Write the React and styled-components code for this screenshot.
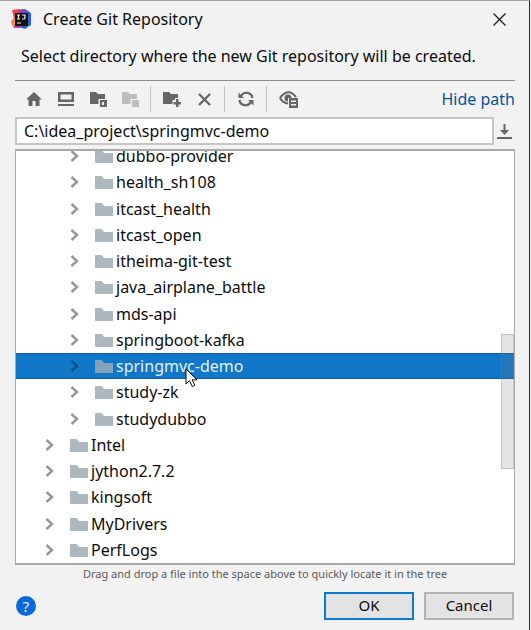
import React, { useState } from "react";
import styled, { createGlobalStyle } from "styled-components";

const GlobalStyle = createGlobalStyle`
  *, *::before, *::after { box-sizing: border-box; }
  body { margin: 0; background: #f1f1f1; }
  body, button, input { font-family: "Noto Sans", "Open Sans", sans-serif; font-size: 16px; color: #0c0c0c; }
`;

const Dialog = styled.main`
  display: flex;
  flex-direction: column;
  height: 100vh;
  min-height: 420px;
  margin-right: 1px;
  padding: 0 14px 10px 15px;
  background: #f2f2f2;
  border-top: 1px solid #a6a6a6;
  border-right: 1px solid #2a2a2a;
`;

const TitleBar = styled.header`
  display: flex;
  align-items: center;
  height: 36px;
  margin-left: -4px;
  gap: 11px;
`;

const Title = styled.h1`
  flex: 1;
  margin: 0;
  font-size: 16px;
  line-height: 24px;
  font-weight: 400;
`;

const IconButton = styled.button`
  display: flex;
  align-items: center;
  justify-content: center;
  width: ${(p) => p.$width || 32}px;
  height: 26px;
  padding: 0;
  border: 0;
  background: none;
  color: #666;
  &:disabled { color: #bdbdbd; }
`;

const CloseButton = styled(IconButton)`
  color: #1c1c1c;
`;

const Prompt = styled.p`
  margin: 0;
  padding: 7px 6px 12px;
  line-height: 24px;
  white-space: nowrap;
`;

const Toolbar = styled.div`
  display: flex;
  align-items: center;
  height: 37px;
  padding-left: 3px;
  border-top: 1px solid #8c8c8c;
`;

const Separator = styled.span`
  width: 1px;
  height: 26px;
  margin: 0 5px 0 4px;
  background: #c3c3c3;
`;

const PathLink = styled.a`
  margin-left: auto;
  color: #07529a;
  line-height: 24px;
  text-decoration: none;
`;

const PathRow = styled.div`
  display: flex;
  align-items: center;
  height: 28px;
  margin-bottom: 4px;
`;

const PathInput = styled.input`
  flex: 1;
  min-width: 0;
  height: 28px;
  padding: 0 7px;
  border: 2px solid #c4c6c9;
  border-radius: 0;
  background: #fff;
  outline: none;
`;

const TreePanel = styled.section`
  position: relative;
  display: flex;
  flex: 1;
  flex-direction: column;
  justify-content: flex-end;
  min-height: 0;
  overflow: hidden;
  border: 1px solid #a9a9a9;
  border-width: 2px 1px;
  background: #fff;
`;

const Tree = styled.ul`
  display: grid;
  flex: none;
  grid-template-rows: repeat(16, 1fr);
  height: 420px;
  margin: 0;
  padding: 0;
  list-style: none;
`;

const TreeRow = styled.li`
  display: flex;
  align-items: center;
  padding-left: ${(p) => (p.$depth === 2 ? 54 : 29)}px;
  color: ${(p) => (p.$selected ? "#e4f1fb" : "#0c0c0c")};
  background: ${(p) => (p.$selected ? "#1077c9" : "transparent")};
  box-shadow: ${(p) => (p.$selected ? "inset 0 1px #0c5c9e, inset 0 -1px #0c5c9e" : "none")};
`;

const Expander = styled.button`
  display: flex;
  width: 25px;
  padding: 0;
  border: 0;
  background: none;
  color: ${(p) => (p.$selected ? "#0d4f87" : "#969696")};
`;

const FolderIcon = styled.svg`
  flex: none;
  margin-right: 3px;
  fill: ${(p) => (p.$selected ? "#84a3b9" : "#adb7be")};
`;

const RowLabel = styled.span`
  line-height: 24px;
  white-space: nowrap;
`;

const ScrollThumb = styled.div`
  position: absolute;
  top: 183px;
  right: 0;
  width: 13px;
  height: 135px;
  border: 1px solid rgba(120, 120, 120, 0.3);
  background: rgba(120, 120, 120, 0.2);
`;

const Hint = styled.p`
  margin: 0;
  font-size: 11px;
  line-height: 17px;
  color: #5a5a5a;
  text-align: center;
`;

const Footer = styled.footer`
  display: flex;
  align-items: center;
  gap: 10px;
  margin-top: 10px;
  padding: 0 1px;
`;

const HelpButton = styled.button`
  width: 20px;
  height: 20px;
  margin-right: auto;
  padding: 0;
  border: 0;
  border-radius: 50%;
  background: #0a68d8;
  color: #e8f3ff;
  font-size: 15px;
  line-height: 20px;
`;

const ActionButton = styled.button`
  width: 90px;
  height: 28px;
  padding: 0 0 2px;
  border: ${(p) => (p.$primary ? "2px solid #0a7ad2" : "2px solid #b3b3b3")};
  border-radius: 0;
  background: #e3e3e3;
  font-size: 15px;
  line-height: 22px;
`;

const Logo = () => (
  <svg width="21" height="20" viewBox="0 0 21 20" aria-hidden="true">
    <path d="M1 1 8 0 13 3 10 19 3 19 0 13 3 9Z" fill="#ec4058" />
    <path d="M0 12 5 8 9 14 6 19 2 18Z" fill="#f58d3c" />
    <path d="M8 1 14 0 20 4 20 16 14 20 8 18Z" fill="#3161d9" />
    <path d="M8 1 13 0 15 3 9 5Z" fill="#8f45ae" />
    <path d="M3 16 8 15 10 19 3 19Z" fill="#b743a4" />
    <path d="M4 4H17V17H4Z" fill="#111" />
    <path d="M6 6H9M7.500 6V10M6 10H9M11 6H14V9Q14 10 12.500 10H11M6 14H10" fill="none" stroke="#f4f4f4" strokeWidth="1.200" />
  </svg>
);

const Folder = "M0 1H6L8 4H16V14H0Z";

const HomeIcon = () => (
  <svg width="16" height="14" viewBox="0 0 16 14" fill="currentColor">
    <path d="M8 0 16 7.500H13.500V14H9.500V9H6.500V14H2.500V7.500H0Z" />
  </svg>
);
const DesktopIcon = () => (
  <svg width="16" height="14" viewBox="0 0 16 14" fill="currentColor">
    <path fillRule="evenodd" d="M0 0H16V10H0ZM2.500 2.500V7.500H13.500V2.500ZM0 12H16V14H0Z" />
  </svg>
);
const ProjectFolderIcon = () => (
  <svg width="17" height="16" viewBox="0 0 17 16" fill="currentColor">
    <path d="M0 1H6L8 3H15V8H8.500V13H0Z" />
    <path fillRule="evenodd" d="M10 9H17V16H10ZM12 11V14H14V11Z" />
  </svg>
);
const ModuleFolderIcon = () => (
  <svg width="17" height="16" viewBox="0 0 17 16" fill="currentColor">
    <path d="M0 1H6L8 3H15V8H8.500V13H0Z" />
    <path d="M10 9H17V16H10Z" />
  </svg>
);
const NewFolderIcon = () => (
  <svg width="18" height="16" viewBox="0 0 18 16" fill="currentColor">
    <path d="M0 1H6L8 3H15V7H12V9H9.500V13H0Z" />
    <path d="M13 8H15.500V11H18V13.500H15.500V16H13V13.500H10.500V11H13Z" />
  </svg>
);
const DeleteIcon = () => (
  <svg width="13" height="13" viewBox="0 0 13 13" fill="none" stroke="currentColor" strokeWidth="2.300">
    <path d="M1 1 12 12M12 1 1 12" />
  </svg>
);
const RefreshIcon = () => (
  <svg width="16" height="16" viewBox="0 0 16 16" fill="none" stroke="currentColor" strokeWidth="2.200">
    <path d="M3 5.500A6 6 0 0 1 14.500 7M13 10.500A6 6 0 0 1 1.500 9" />
    <path d="M0.500 1.500V7H6ZM15.500 14.500V9H10Z" fill="currentColor" stroke="none" />
  </svg>
);
const HiddenFilesIcon = () => (
  <svg width="19" height="17" viewBox="0 0 19 17">
    <path d="M1 7Q9 -4 17 6M1 7Q4 12 9 12.500" fill="none" stroke="currentColor" strokeWidth="2.200" />
    <path d="M9 3.500A3.500 3.500 0 1 0 9 10.500V7H12.500A3.500 3.500 0 0 0 9 3.500Z" fill="currentColor" />
    <path fillRule="evenodd" d="M10 7H19V17H10ZM12 9.500V11H17V9.500ZM12 13V14.500H17V13Z" fill="currentColor" />
  </svg>
);
const CloseIcon = () => (
  <svg width="13" height="13" viewBox="0 0 13 13" fill="none" stroke="currentColor" strokeWidth="1.300">
    <path d="M0.500 0.500 12.500 12.500M12.500 0.500 0.500 12.500" />
  </svg>
);
const DownloadIcon = () => (
  <svg width="15" height="15" viewBox="0 0 15 15" fill="currentColor">
    <path d="M6.500 0H8.500V6H12L7.500 11 3 6H6.500ZM0 13H15V15H0Z" />
  </svg>
);
const Chevron = () => (
  <svg width="9" height="12" viewBox="0 0 9 12" fill="none" stroke="currentColor" strokeWidth="2.400">
    <path d="M1.500 1 7 6 1.500 11" />
  </svg>
);
const Pointer = styled.svg`
  position: absolute;
  top: 217px;
  left: 169px;
  pointer-events: none;
`;

const tools = [
  { label: "Home", Icon: HomeIcon },
  { label: "Desktop", Icon: DesktopIcon },
  { label: "Project folder", Icon: ProjectFolderIcon },
  { label: "Module folder", Icon: ModuleFolderIcon, disabled: true },
  null,
  { label: "New folder", Icon: NewFolderIcon },
  { label: "Delete", Icon: DeleteIcon },
  null,
  { label: "Refresh", Icon: RefreshIcon },
  null,
  { label: "Show hidden files", Icon: HiddenFilesIcon },
];

const folders = [
  ["dubbo-provider", 2],
  ["health_sh108", 2],
  ["itcast_health", 2],
  ["itcast_open", 2],
  ["itheima-git-test", 2],
  ["java_airplane_battle", 2],
  ["mds-api", 2],
  ["springboot-kafka", 2],
  ["springmvc-demo", 2],
  ["study-zk", 2],
  ["studydubbo", 2],
  ["Intel", 1],
  ["jython2.7.2", 1],
  ["kingsoft", 1],
  ["MyDrivers", 1],
  ["PerfLogs", 1],
];

export default function App() {
  const [path, setPath] = useState("C:\\idea_project\\springmvc-demo");
  const [selected, setSelected] = useState("springmvc-demo");

  return (
    <>
      <GlobalStyle />
      <Dialog>
        <TitleBar>
          <Logo />
          <Title>Create Git Repository</Title>
          <CloseButton aria-label="Close"><CloseIcon /></CloseButton>
        </TitleBar>
        <Prompt>Select directory where the new Git repository will be created.</Prompt>
        <Toolbar role="toolbar">
          {tools.map((tool, i) =>
            tool ? (
              <IconButton key={tool.label} aria-label={tool.label} disabled={tool.disabled}>
                <tool.Icon />
              </IconButton>
            ) : (
              <Separator key={i} />
            )
          )}
          <PathLink href="#path">Hide path</PathLink>
        </Toolbar>
        <PathRow>
          <PathInput id="path" aria-label="Path" value={path} onChange={(e) => setPath(e.target.value)} />
          <IconButton $width={21} aria-label="Path history"><DownloadIcon /></IconButton>
        </PathRow>
        <TreePanel>
          <Tree role="tree">
            {folders.map(([name, depth]) => {
              const active = name === selected;
              return (
                <TreeRow
                  key={name}
                  role="treeitem"
                  aria-selected={active}
                  $depth={depth}
                  $selected={active}
                  onClick={() => setSelected(name)}
                >
                  <Expander $selected={active} aria-label={`Expand ${name}`}><Chevron /></Expander>
                  <FolderIcon $selected={active} width="18" height="14" viewBox="0 0 16 14" preserveAspectRatio="none">
                    <path d={Folder} />
                  </FolderIcon>
                  <RowLabel>{name}</RowLabel>
                </TreeRow>
              );
            })}
          </Tree>
          <ScrollThumb />
          <Pointer width="13" height="20" viewBox="0 0 13 20" aria-hidden="true">
            <path d="M1 1V16L4.500 12.800 7.200 18.500 9.800 17.300 7.200 11.800H12Z" fill="#fff" stroke="#111" />
          </Pointer>
        </TreePanel>
        <Hint>Drag and drop a file into the space above to quickly locate it in the tree</Hint>
        <Footer>
          <HelpButton aria-label="Help">?</HelpButton>
          <ActionButton $primary>OK</ActionButton>
          <ActionButton>Cancel</ActionButton>
        </Footer>
      </Dialog>
    </>
  );
}
